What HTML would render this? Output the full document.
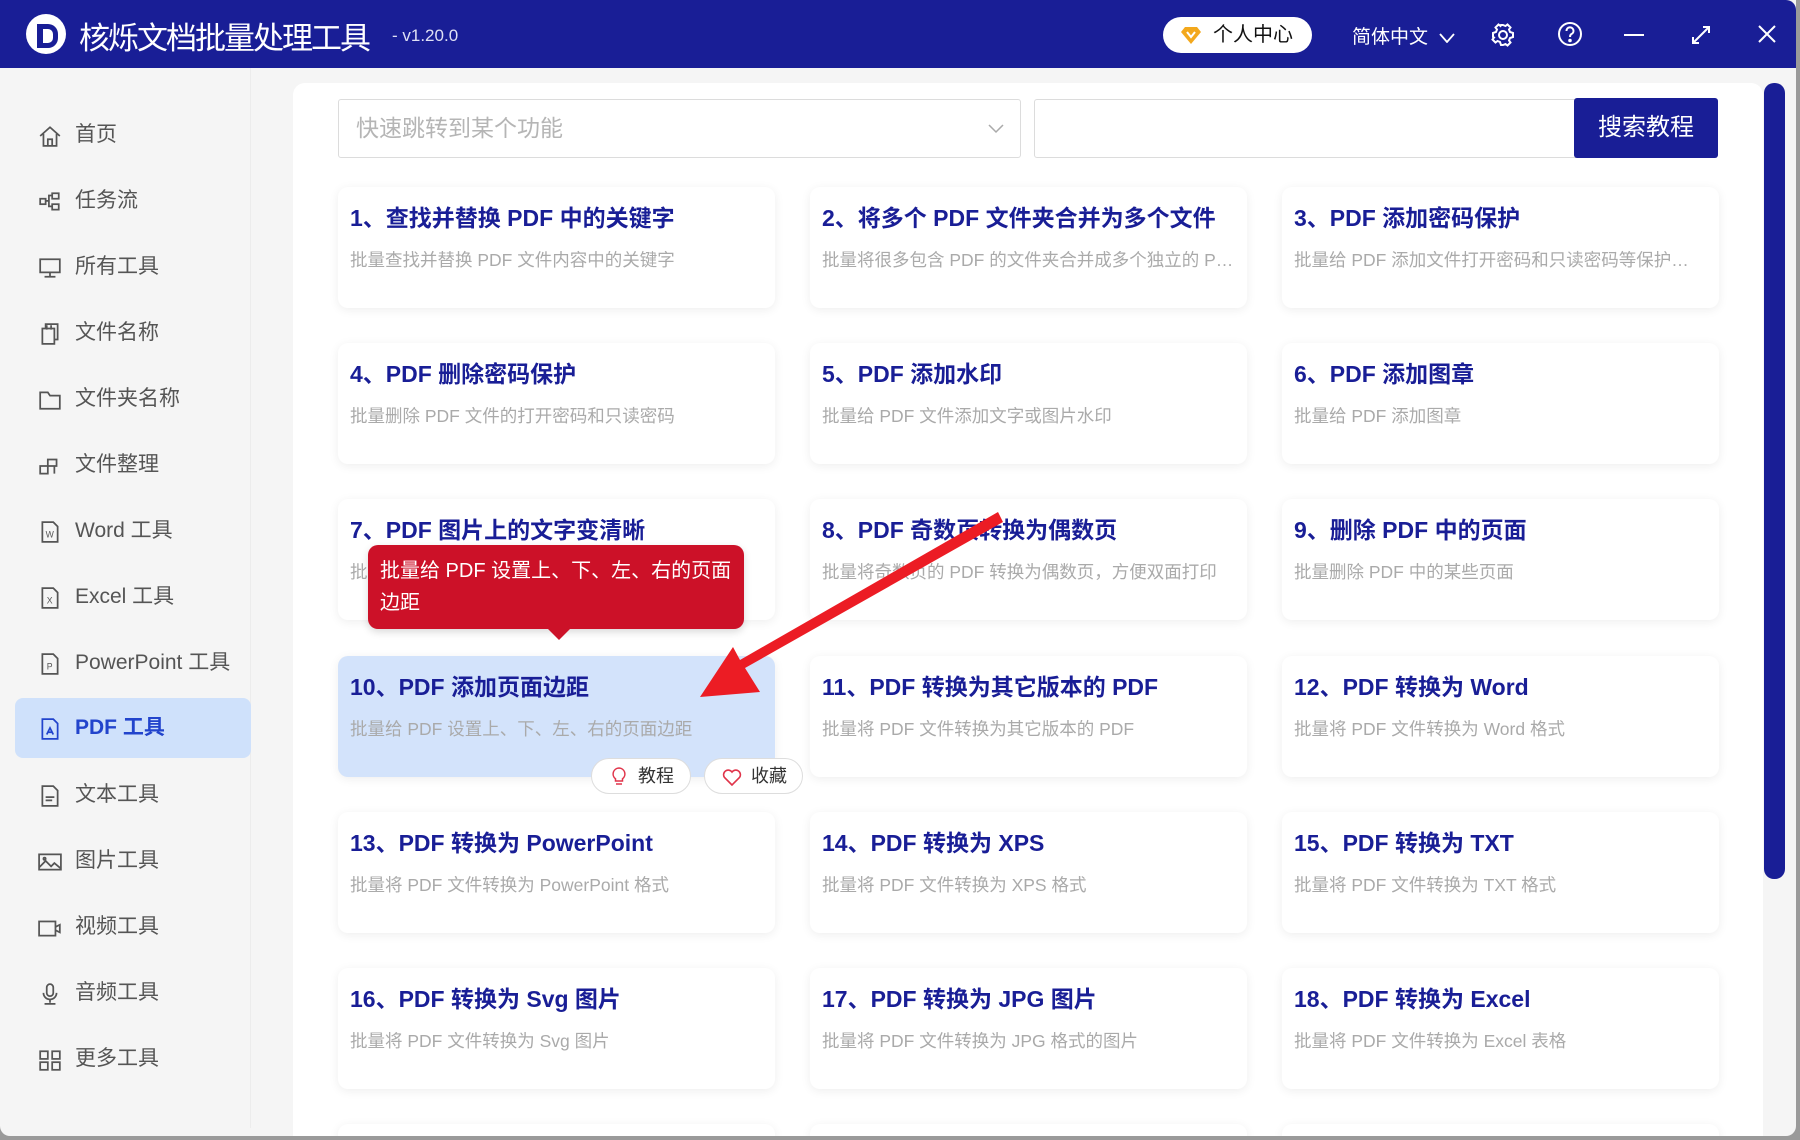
<!DOCTYPE html>
<html><head><meta charset="utf-8"><style>
*{margin:0;padding:0;box-sizing:border-box}
html,body{width:1800px;height:1140px;overflow:hidden}
body{background:#9a9a9a;font-family:"Liberation Sans","Noto Sans CJK SC",sans-serif;position:relative}
.win{position:absolute;left:0;top:0;width:1796px;height:1136px;background:#f5f5f5;border-radius:0 0 10px 10px;overflow:hidden}
.top{position:absolute;left:0;top:0;width:1796px;height:68px;background:#191e96;border-radius:0 10px 0 0}
.logo{position:absolute;left:26px;top:14px;width:40px;height:40px;border-radius:50%;background:#fff}
.logo:after{content:"";position:absolute;left:11px;top:10px;width:10px;height:14px;border:5px solid #191e96;border-left-width:6px;border-radius:0 10px 10px 0}
.title{position:absolute;left:79px;top:13px;color:#fff;font-size:31px;letter-spacing:-2px}
.ver{position:absolute;left:392px;top:26px;color:#dfe0f5;font-size:17px}
.pill{position:absolute;left:1163px;top:17px;width:149px;height:36px;background:#fff;border-radius:18px;font-size:20px;color:#111;line-height:36px;padding-left:50px}
.lang{position:absolute;left:1352px;top:22px;color:#fff;font-size:19px}
.side{position:absolute;left:0;top:68px;width:251px;height:1060px;border-right:1px solid #ececec}
.it{position:absolute;left:15px;width:236px;height:60px;font-size:21px;color:#555;line-height:60px;padding-left:60px}
.it svg{position:absolute;left:23px;top:19px}
.it.on{background:#cfe1fb;border-radius:8px;color:#2244cc;font-weight:bold}
.panel{position:absolute;left:293px;top:83px;width:1470px;height:1053px;background:#fff;border-radius:12px 12px 0 0}
.sel{position:absolute;left:338px;top:99px;width:683px;height:59px;border:1px solid #dcdcdc;border-radius:3px;font-size:23px;color:#b5b5b5;line-height:57px;padding-left:17px}
.inp{position:absolute;left:1034px;top:99px;width:545px;height:59px;border:1px solid #dcdcdc;border-radius:3px}
.btn{position:absolute;left:1574px;top:98px;width:144px;height:60px;background:#191e96;color:#fff;font-size:24px;text-align:center;line-height:60px;border-radius:3px}
.card{position:absolute;width:437px;height:121px;background:#fff;border-radius:10px;box-shadow:0 2px 10px rgba(0,0,0,.07);overflow:hidden}
.card b{position:absolute;left:12px;top:12px;font-size:23px;color:#191e96;white-space:nowrap}
.card span{position:absolute;left:12px;top:60px;font-size:17.5px;color:#aaa;white-space:nowrap;width:412px;overflow:hidden;text-overflow:ellipsis}
.card.hl{background:#d3e3fb}
.sb{position:absolute;left:1764px;top:83px;width:21px;height:796px;background:#191e96;border-radius:10px}
.tip{position:absolute;left:368px;top:545px;width:376px;height:84px;background:#cc1128;border-radius:10px;color:#fff;font-size:20px;line-height:32px;padding:10px 12px;box-shadow:0 3px 8px rgba(0,0,0,.15)}
.tip:after{content:"";position:absolute;left:180px;top:84px;border:11px solid transparent;border-top-color:#cc1128;border-bottom:0}
.sm{position:absolute;top:758px;height:36px;background:#fff;border:1px solid #ddd;border-radius:18px;font-size:18px;color:#333;line-height:34px;padding-left:46px}
</style></head><body><div class="win">
<div class="top">
<div class="logo"></div>
<div class="title">核烁文档批量处理工具</div>
<div class="ver">- v1.20.0</div>
<div class="pill"><svg style="position:absolute;left:18px;top:9px" width="20" height="18" viewBox="0 0 20 18"><path d="M4 1h12l4 5-10 12L0 6z" fill="#f3a81c"/><path d="M6 6l4 5 4-5" stroke="#fff" stroke-width="2" fill="none"/></svg>个人中心</div>
<div class="lang">简体中文 <svg width="16" height="10" viewBox="0 0 16 10" style="margin-left:6px"><path d="M1 1l7 8 7-8" stroke="#fff" stroke-width="1.8" fill="none"/></svg></div>
<svg style="position:absolute;left:1490px;top:22px" width="26" height="26" viewBox="0 0 26 26" fill="none" stroke="#fff" stroke-width="2"><circle cx="13" cy="13" r="4"/><path d="M13 3l2.5 1 2-1.5 3 3-1.5 2L20 10l3 1v4l-3 1-1 2.5 1.5 2-3 3-2-1.5L13 23l-2 0-1-3-2.5-1-2 1.5-3-3 1.5-2L3 15l-0-4 3-1 1-2.5-1.5-2 3-3 2 1.5L11 3z"/></svg>
<svg style="position:absolute;left:1557px;top:21px" width="26" height="26" viewBox="0 0 26 26" fill="none" stroke="#fff" stroke-width="2"><circle cx="13" cy="13" r="11"/><path d="M9.5 10a3.5 3.5 0 1 1 5 3c-1.3.7-1.5 1.5-1.5 3"/><circle cx="13" cy="19.5" r=".8" fill="#fff"/></svg>
<div style="position:absolute;left:1624px;top:34px;width:20px;height:2px;background:#fff"></div>
<svg style="position:absolute;left:1690px;top:24px" width="22" height="22" viewBox="0 0 22 22" fill="none" stroke="#fff" stroke-width="2"><path d="M3 19L19 3M13 3h6v6M3 13v6h6"/></svg>
<svg style="position:absolute;left:1757px;top:24px" width="20" height="20" viewBox="0 0 20 20" stroke="#fff" stroke-width="2"><path d="M2 2l16 16M18 2L2 18"/></svg>
</div>

<div class="side">
<div class="it" style="top:37px"><svg width="24" height="24" viewBox="0 0 22 22" fill="none" stroke="#555" stroke-width="1.6"><path d="M2 11L11 3l9 8M5 9v11h12V9M9 20v-6h4v6"/></svg>首页</div>
<div class="it" style="top:103px"><svg width="24" height="24" viewBox="0 0 22 22" fill="none" stroke="#555" stroke-width="1.6"><rect x="2" y="8" width="5" height="5"/><rect x="13" y="3" width="6" height="5"/><rect x="13" y="13" width="6" height="5"/><path d="M7 10h3V5h3M10 10v5h3"/></svg>任务流</div>
<div class="it" style="top:169px"><svg width="24" height="24" viewBox="0 0 22 22" fill="none" stroke="#555" stroke-width="1.6"><rect x="2" y="3" width="18" height="12"/><path d="M11 15v4M6 19h10"/></svg>所有工具</div>
<div class="it" style="top:235px"><svg width="24" height="24" viewBox="0 0 22 22" fill="none" stroke="#555" stroke-width="1.6"><path d="M4 6h11v14H4zM7 6V2h11v14h-3M8 3v4M12 3v4"/></svg>文件名称</div>
<div class="it" style="top:301px"><svg width="24" height="24" viewBox="0 0 22 22" fill="none" stroke="#555" stroke-width="1.6"><path d="M2 4h7l2 3h9v12H2z"/></svg>文件夹名称</div>
<div class="it" style="top:367px"><svg width="24" height="24" viewBox="0 0 22 22" fill="none" stroke="#555" stroke-width="1.6"><path d="M2 11h7v7H2zM9 11h6v7M9 11V5h8v6h-2"/></svg>文件整理</div>
<div class="it" style="top:433px"><svg width="24" height="24" viewBox="0 0 22 22" fill="none" stroke="#555" stroke-width="1.6"><path d="M4 2h10l4 4v14H4z"/><text x="7" y="16" font-size="8" fill="#555" stroke="none">W</text></svg>Word 工具</div>
<div class="it" style="top:499px"><svg width="24" height="24" viewBox="0 0 22 22" fill="none" stroke="#555" stroke-width="1.6"><path d="M4 2h10l4 4v14H4z"/><text x="8" y="16" font-size="8" fill="#555" stroke="none">X</text></svg>Excel 工具</div>
<div class="it" style="top:565px"><svg width="24" height="24" viewBox="0 0 22 22" fill="none" stroke="#555" stroke-width="1.6"><path d="M4 2h10l4 4v14H4z"/><text x="8" y="16" font-size="8" fill="#555" stroke="none">P</text></svg>PowerPoint 工具</div>
<div class="it on" style="top:630px"><svg width="24" height="24" viewBox="0 0 22 22" fill="none" stroke="#2244cc" stroke-width="1.6"><path d="M4 2h10l4 4v14H4z"/><path d="M8 16l3-6 3 6M9 14h4"/></svg>PDF 工具</div>
<div class="it" style="top:697px"><svg width="24" height="24" viewBox="0 0 22 22" fill="none" stroke="#555" stroke-width="1.6"><path d="M4 2h10l4 4v14H4zM7 12h8M7 15h6"/></svg>文本工具</div>
<div class="it" style="top:763px"><svg width="24" height="24" viewBox="0 0 22 22" fill="none" stroke="#555" stroke-width="1.6"><rect x="1" y="4" width="20" height="14"/><path d="M1 16l6-6 5 5 3-3 6 5"/><circle cx="6" cy="8" r="1"/></svg>图片工具</div>
<div class="it" style="top:829px"><svg width="24" height="24" viewBox="0 0 22 22" fill="none" stroke="#555" stroke-width="1.6"><rect x="1" y="5" width="15" height="13"/><path d="M16 10l4-2v7l-4-2"/></svg>视频工具</div>
<div class="it" style="top:895px"><svg width="24" height="24" viewBox="0 0 22 22" fill="none" stroke="#555" stroke-width="1.6"><rect x="8" y="2" width="6" height="11" rx="3"/><path d="M5 10a6 6 0 0 0 12 0M11 16v3M6 20h10"/></svg>音频工具</div>
<div class="it" style="top:961px"><svg width="24" height="24" viewBox="0 0 22 22" fill="none" stroke="#555" stroke-width="1.6"><rect x="2" y="3" width="7" height="7"/><rect x="13" y="3" width="7" height="7"/><rect x="2" y="13" width="7" height="7"/><rect x="13" y="13" width="7" height="7"/></svg>更多工具</div>
</div>

<div class="panel"></div>
<div class="sel">快速跳转到某个功能<svg style="position:absolute;right:16px;top:24px" width="16" height="10" viewBox="0 0 16 10"><path d="M1 1l7 7 7-7" stroke="#aaa" stroke-width="1.5" fill="none"/></svg></div>
<div class="inp"></div>
<div class="btn">搜索教程</div>

<div class="card" style="left:338px;top:187px"><b>1、查找并替换 PDF 中的关键字</b><span>批量查找并替换 PDF 文件内容中的关键字</span></div>
<div class="card" style="left:810px;top:187px"><b>2、将多个 PDF 文件夹合并为多个文件</b><span>批量将很多包含 PDF 的文件夹合并成多个独立的 PDF 文件</span></div>
<div class="card" style="left:1282px;top:187px"><b>3、PDF 添加密码保护</b><span>批量给 PDF 添加文件打开密码和只读密码等保护措施</span></div>
<div class="card" style="left:338px;top:343px"><b>4、PDF 删除密码保护</b><span>批量删除 PDF 文件的打开密码和只读密码</span></div>
<div class="card" style="left:810px;top:343px"><b>5、PDF 添加水印</b><span>批量给 PDF 文件添加文字或图片水印</span></div>
<div class="card" style="left:1282px;top:343px"><b>6、PDF 添加图章</b><span>批量给 PDF 添加图章</span></div>
<div class="card" style="left:338px;top:499px"><b>7、PDF 图片上的文字变清晰</b><span>批量将 PDF 图片上的文字变清晰</span></div>
<div class="card" style="left:810px;top:499px"><b>8、PDF 奇数页转换为偶数页</b><span>批量将奇数页的 PDF 转换为偶数页，方便双面打印</span></div>
<div class="card" style="left:1282px;top:499px"><b>9、删除 PDF 中的页面</b><span>批量删除 PDF 中的某些页面</span></div>
<div class="card hl" style="left:338px;top:656px"><b>10、PDF 添加页面边距</b><span>批量给 PDF 设置上、下、左、右的页面边距</span></div>
<div class="card" style="left:810px;top:656px"><b>11、PDF 转换为其它版本的 PDF</b><span>批量将 PDF 文件转换为其它版本的 PDF</span></div>
<div class="card" style="left:1282px;top:656px"><b>12、PDF 转换为 Word</b><span>批量将 PDF 文件转换为 Word 格式</span></div>
<div class="card" style="left:338px;top:812px"><b>13、PDF 转换为 PowerPoint</b><span>批量将 PDF 文件转换为 PowerPoint 格式</span></div>
<div class="card" style="left:810px;top:812px"><b>14、PDF 转换为 XPS</b><span>批量将 PDF 文件转换为 XPS 格式</span></div>
<div class="card" style="left:1282px;top:812px"><b>15、PDF 转换为 TXT</b><span>批量将 PDF 文件转换为 TXT 格式</span></div>
<div class="card" style="left:338px;top:968px"><b>16、PDF 转换为 Svg 图片</b><span>批量将 PDF 文件转换为 Svg 图片</span></div>
<div class="card" style="left:810px;top:968px"><b>17、PDF 转换为 JPG 图片</b><span>批量将 PDF 文件转换为 JPG 格式的图片</span></div>
<div class="card" style="left:1282px;top:968px"><b>18、PDF 转换为 Excel</b><span>批量将 PDF 文件转换为 Excel 表格</span></div>
<div class="card" style="left:338px;top:1124px;height:16px;border-radius:10px 10px 0 0"></div>
<div class="card" style="left:810px;top:1124px;height:16px;border-radius:10px 10px 0 0"></div>
<div class="card" style="left:1282px;top:1124px;height:16px;border-radius:10px 10px 0 0"></div>

<div class="sm" style="left:591px;width:100px"><svg style="position:absolute;left:20px;top:8px" width="14" height="20" viewBox="0 0 14 20" fill="none" stroke="#e0344a" stroke-width="1.5"><path d="M7 1a6 6 0 0 0-3.5 10.8V14h7v-2.2A6 6 0 0 0 7 1zM4 17h6"/></svg>教程</div>
<div class="sm" style="left:704px;width:99px"><svg style="position:absolute;left:17px;top:10px" width="20" height="17" viewBox="0 0 20 17" fill="none" stroke="#e0344a" stroke-width="1.6"><path d="M10 16L2.5 8.5A4.3 4.3 0 0 1 10 3a4.3 4.3 0 0 1 7.5 5.5z"/></svg>收藏</div>

<div class="tip">批量给 PDF 设置上、下、左、右的页面边距</div>
<div class="sb"></div>

<svg style="position:absolute;left:0;top:0" width="1800" height="1136"><path d="M998 512L1003 522 745 668 760 692 700 697 733 647 740 660z" fill="#ec1c24"/></svg>
</div></body></html>
